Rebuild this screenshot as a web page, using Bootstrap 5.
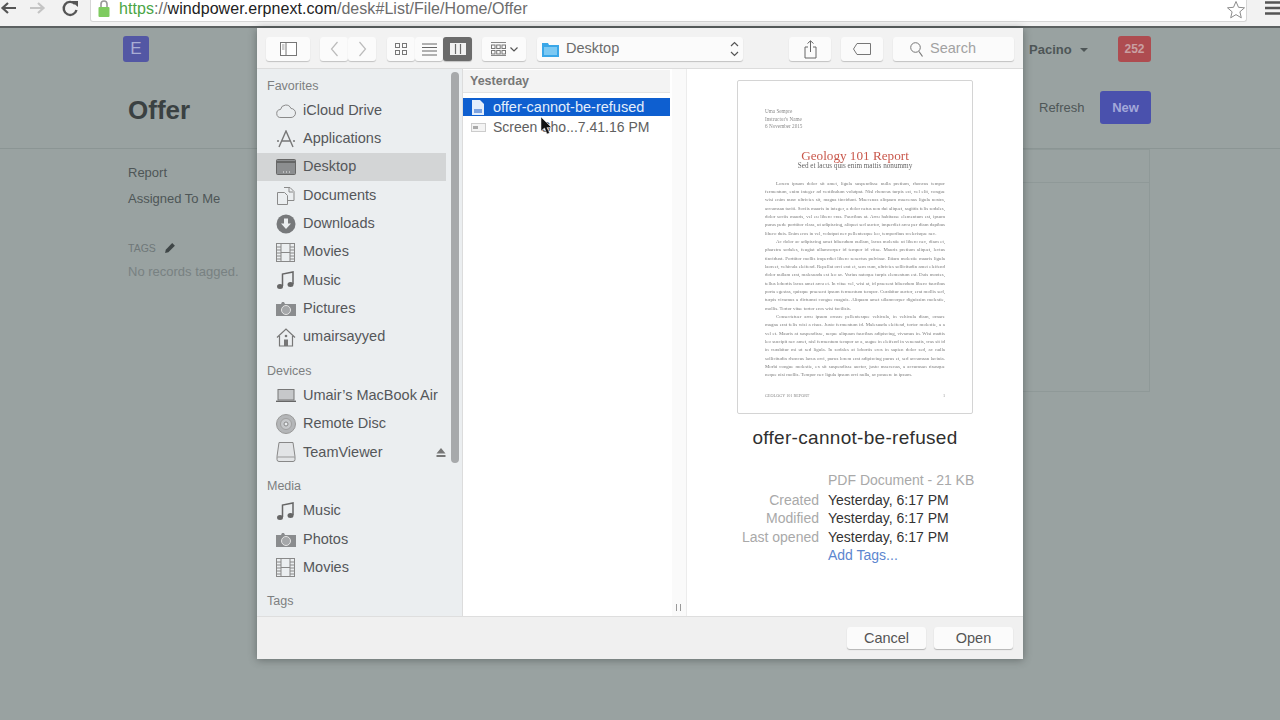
<!DOCTYPE html>
<html lang="en">
<head>
  <meta charset="UTF-8" />
  <meta name="viewport" content="width=device-width, initial-scale=1.0"/>
  <title>Offer</title>
  <link href="https://cdn.jsdelivr.net/npm/bootstrap@5.3.0/dist/css/bootstrap.min.css" rel="stylesheet" />
  <style>
    html, body { height: 720px; overflow: hidden; }
    body { font-family: "Liberation Sans", Arial, sans-serif; background: #99a2a1; color: #3a4142; position: relative; }

    /* browser chrome */
    .chrome { height: 28px; background: #f2f2f2; border-bottom: 2px solid #5c6161; }
    .chrome-nav { width: 90px; }
    .url-field { height: 22px; width: 1157px; background: #fff; border-radius: 0 0 3px 3px; border: 1px solid #d6d6d6; border-top: 0; font-size: 16px; letter-spacing: .06px; line-height: 17px; padding-left: 28px; position: relative; color: #6c6c6c; }
    .url-field b { font-weight: 400; color: #4aa544; }
    .url-field i { font-style: normal; color: #222; }
    .url-lock { position: absolute; left: 6px; top: 0; }
    .url-star { position: absolute; right: 0; top: 0; }

    /* dimmed page behind the dialog */
    .page-nav { height: 42px; padding: 8px 0 0 123px; }
    .logo-e { width: 26px; height: 26px; border-radius: 3px; background: #5357a4; color: #a9add4; font-size: 17px; line-height: 26px; text-align: center; }
    .user-name { font-size: 13px; font-weight: 700; color: #4e5657; margin-left: 880px; width: 89px; padding-top: 4px; }
    .user-caret { display: inline-block; border: 4px solid transparent; border-top-color: #4e5657; border-bottom: 0; margin: 0 0 2px 5px; }
    .notif { width: 33px; height: 26px; border-radius: 3px; background: #ae4c50; color: #c9a0a2; font-size: 12px; font-weight: 700; line-height: 26px; text-align: center; }
    .page-head { height: 79px; border-bottom: 1px solid #8b9594; padding-left: 128px; }
    .page-title { font-size: 26px; font-weight: 700; color: #3a4142; margin: 0; line-height: 30px; padding-top: 25px; width: 911px; }
    .refresh-link { font-size: 13px; color: #4e5657; width: 61px; padding-top: 28px; }
    .new-btn { width: 51px; height: 33px; margin-top: 21px; border-radius: 3px; background: #4a51ad; color: #a3a8d9; font-size: 13px; font-weight: 700; line-height: 33px; text-align: center; }
    .page-body { padding-left: 128px; }
    .side-col { width: 895px; padding-top: 11px; }
    .side-link { font-size: 13px; line-height: 26px; color: #4e5657; }
    .tag-head { font-size: 10.5px; color: #6f7879; margin-top: 29px; line-height: 14px; }
    .tag-none { font-size: 13px; color: #788182; margin-top: 9px; line-height: 16px; }
    .list-panel { width: 127px; height: 243px; border: 1px solid #8f9998; border-left: 0; }
    .list-panel-head { height: 33px; border-bottom: 1px solid #8f9998; }

    /* file dialog */
    .file-dialog { position: absolute; left: 257px; top: 28px; width: 766px; height: 631px; background: #fff; box-shadow: 0 1px 8px rgba(40,45,45,.45); color: #4b4b4b; display: flex; flex-direction: column; }
    .dlg-toolbar { height: 41px; flex: none; background: #f2f2f2; border-bottom: 1px solid #dcdcdc; padding: 9px 0 0 9px; }
    .tb-btn { height: 24px; background: #fbfbfb; border-radius: 3px; box-shadow: 0 1px 1px rgba(0,0,0,.2); display: flex; align-items: center; justify-content: center; flex: none; }
    .tb-wide { width: 44px; }
    .tb-narrow { width: 28px; }
    .tb-mid { width: 42px; margin-right: 10px; }
    .tb-gap { margin-left: 10px; }
    .tb-gap-lg { margin-left: 11px; }
    .tb-group-icons { gap: 4px; }
    .tb-active { background: #6b6b6b; width: 29px; }
    .path-pop { width: 206px; justify-content: flex-start; padding-left: 5px; font-size: 14.5px; color: #6b6b6b; gap: 7px; margin: 0 46px 0 11px; position: relative; }
    .path-arrows { position: absolute; right: 4px; top: 3px; }
    .search-box { width: 121px; font-size: 14.5px; color: #a2a2a2; gap: 7px; justify-content: flex-start; padding-left: 17px; }
    .dlg-main { flex: 1; min-height: 0; }
    .dlg-side { width: 206px; flex: none; background: #ebeef0; border-right: 1px solid #dcdcdc; position: relative; overflow: hidden; padding-top: 10px; }
    .side-scroll { position: absolute; left: 194px; top: 3px; width: 8px; height: 391px; border-radius: 4px; background: #a7a9ab; }
    .group-label { font-size: 12.5px; line-height: 14px; color: #7d7f80; padding-left: 10px; margin-bottom: 3.5px; }
    .group-next { margin-top: 12.5px; margin-bottom: 4px; }
    .place { height: 28.3px; display: flex; align-items: center; font-size: 14.5px; color: #55575a; padding-left: 19px; gap: 7px; }
    .place svg { flex: none; }
    .place-on { background: #d3d5d6; width: 189px; }
    .eject-mark { margin-left: 46px; }
    .file-col { width: 209px; flex: none; background: #fff; padding-top: 1px; }
    .col-head { height: 23px; margin-right: 2px; background: #f3f3f3; border-bottom: 1px solid #e2e2e2; font-size: 12.5px; font-weight: 700; color: #777; line-height: 23px; padding-left: 7px; }
    .file-row { height: 19px; margin-right: 2px; margin-top: 1px; padding-top: 1px; display: flex; align-items: center; font-size: 14px; color: #606060; gap: 7px; padding-left: 8px; }
    .file-sel { background: #0e5fd0; color: #e4eefb; margin-top: 5px; height: 18px; font-size: 14.5px; gap: 8px; }
    .col-handle { width: 15px; flex: none; background: #fafafa; border-right: 1px solid #ececec; position: relative; }
    .col-handle span { position: absolute; left: 4px; bottom: 5px; width: 5px; height: 7px; border-left: 1px solid #999; border-right: 1px solid #999; }
    .preview { flex: 1; min-width: 0; position: relative; }
    .pdf-sheet { position: absolute; left: 50px; top: 11px; width: 236px; height: 334px; border: 1px solid #d4d4d4; border-radius: 2px; background: #fff; }
    .pdf-page { padding: 27px 27px 0; font-family: "Liberation Serif", "Times New Roman", serif; color: #6e6e6e; filter: blur(.4px); }
    .pdf-meta { font-size: 5.2px; line-height: 7.5px; color: #8a8a8a; }
    .pdf-title { font-size: 13.2px; line-height: 13px; color: #c9574b; text-align: center; margin-top: 18px; }
    .pdf-sub { font-size: 7.2px; line-height: 8px; color: #666; text-align: center; }
    .pdf-para { font-size: 4.9px; line-height: 8.35px; margin: 10px 0 0; color: #7a7a7a; text-align: justify; text-indent: 11px; }
    .pdf-para + .pdf-para { margin-top: 0; }
    .pdf-foot { font-size: 4.2px; color: #888; margin-top: 13px; display: flex; justify-content: space-between; }
    .doc-name { position: absolute; left: 0; right: 0; top: 359px; text-align: center; font-size: 19px; letter-spacing: .3px; line-height: 20px; color: #2f2f2f; }
    .doc-info { position: absolute; left: 0; top: 402px; font-size: 14px; line-height: 18.5px; color: #333; }
    .info-key { width: 141px; text-align: right; color: #a9a9a9; padding-right: 9px; flex: none; }
    .doc-grey { color: #a9a9a9; }
    .doc-kind { margin-bottom: 1px; }
    .doc-tags { color: #5c86cf; }
    .dlg-foot { height: 43px; flex: none; background: #f0f0f0; border-top: 1px solid #dedede; padding: 10px 10px 0 0; gap: 8px; }
    .foot-btn { width: 79px; height: 22px; background: #fbfbfb; border-radius: 3px; box-shadow: 0 1px 1px rgba(0,0,0,.25); font-size: 14.5px; line-height: 22px; text-align: center; color: #555; }
    .mouse-arrow { position: absolute; left: 540px; top: 117px; }
  </style>
</head>
<body>
  <!-- browser toolbar -->
  <div class="chrome d-flex">
    <div class="chrome-nav d-flex align-items-start">
      <svg width="90" height="20" viewBox="0 0 90 20">
        <path d="M16 8H3M8 3 2.500 8 8 13" fill="none" stroke="#555" stroke-width="2.200"/>
        <path d="M30 8h13M38 3l5.500 5-5.500 5" fill="none" stroke="#c4c4c4" stroke-width="2.200"/>
        <path d="M75 4a6.500 6.500 0 1 0 1.500 6" fill="none" stroke="#555" stroke-width="2.400"/>
        <path d="M71 1h7v6z" fill="#555"/>
      </svg>
    </div>
    <div class="url-field">
      <svg class="url-lock" width="14" height="18" viewBox="0 0 14 18"><path d="M4 8V4a3 3 0 0 1 6 0v4" fill="none" stroke="#999" stroke-width="1.600"/><rect x="1.500" y="7" width="11" height="10" rx="1" fill="#7ecb5f"/></svg>
      <b>https</b>://<i>windpower.erpnext.com</i>/desk#List/File/Home/Offer
      <svg class="url-star" width="20" height="19" viewBox="0 0 20 19"><path d="M10 1.500l2.500 5.800 6 .5-4.600 4 1.400 6L10 14.600 4.700 17.800l1.400-6-4.600-4 6-.5z" fill="#fff" stroke="#8c8c8c"/></svg>
    </div>
    <div class="flex-grow-1 d-flex justify-content-end">
      <svg width="16" height="16" viewBox="0 0 16 16"><path d="M1 2.500h15M1 8h15M1 13.500h15" stroke="#555" stroke-width="2.400"/></svg>
    </div>
  </div>

  <!-- dimmed desk page -->
  <div class="page-nav d-flex">
    <div class="logo-e">E</div>
    <div class="user-name">Pacino <span class="user-caret"></span></div>
    <div class="notif">252</div>
  </div>
  <div class="page-head d-flex">
    <h1 class="page-title">Offer</h1>
    <div class="refresh-link">Refresh</div>
    <div class="new-btn">New</div>
  </div>
  <div class="page-body d-flex">
    <div class="side-col">
      <div class="side-link">Report</div>
      <div class="side-link">Assigned To Me</div>
      <div class="tag-head d-flex align-items-center gap-2">TAGS
        <svg width="12" height="12" viewBox="0 0 11 11"><path d="M1 10l.6-3L7.500 1 10 3.500 4 9.400z" fill="#3f4647"/></svg>
      </div>
      <div class="tag-none">No records tagged.</div>
    </div>
    <div class="list-panel"><div class="list-panel-head"></div></div>
  </div>

  <!-- open file dialog -->
  <div class="file-dialog">
    <div class="dlg-toolbar d-flex">
      <div class="tb-btn tb-wide">
        <svg width="17" height="14" viewBox="0 0 17 14"><rect x=".5" y=".5" width="16" height="13" fill="#fff" stroke="#777"/><path d="M6 .5v13" stroke="#777"/><path d="M2 3h2.500M2 5h2.500M2 7h2.500" stroke="#999"/></svg>
      </div>
      <div class="tb-btn tb-narrow tb-gap">
        <svg width="9" height="16" viewBox="0 0 9 16"><path d="M7.500 1 1.500 8l6 7" fill="none" stroke="#bbb" stroke-width="1.200"/></svg>
      </div>
      <div class="tb-btn tb-narrow">
        <svg width="9" height="16" viewBox="0 0 9 16"><path d="M1.500 1l6 7-6 7" fill="none" stroke="#bbb" stroke-width="1.200"/></svg>
      </div>
      <div class="tb-btn tb-narrow tb-gap-lg">
        <svg width="12" height="12" viewBox="0 0 12 12"><g fill="none" stroke="#777"><rect x=".5" y=".5" width="4" height="4"/><rect x="7.500" y=".5" width="4" height="4"/><rect x=".5" y="7.500" width="4" height="4"/><rect x="7.500" y="7.500" width="4" height="4"/></g></svg>
      </div>
      <div class="tb-btn tb-narrow">
        <svg width="15" height="13" viewBox="0 0 15 13"><path d="M0 1h15M0 4.500h15M0 8h15M0 12h15" stroke="#666"/></svg>
      </div>
      <div class="tb-btn tb-active">
        <svg width="16" height="12" viewBox="0 0 16 12"><rect x=".5" y=".5" width="15" height="11" fill="#f2f2f2" stroke="#f2f2f2"/><path d="M5.500 1v10M10.500 1v10" stroke="#6b6b6b" stroke-width="1.200"/></svg>
      </div>
      <div class="tb-btn tb-wide tb-gap tb-group-icons">
        <svg width="15" height="14" viewBox="0 0 15 14"><path d="M0 .5h15M0 13.500h15" stroke="#888"/><g fill="none" stroke="#777"><rect x=".5" y="3" width="3.500" height="3.500"/><rect x="5.700" y="3" width="3.500" height="3.500"/><rect x="11" y="3" width="3.500" height="3.500"/><rect x=".5" y="8.500" width="3.500" height="3.500"/><rect x="5.700" y="8.500" width="3.500" height="3.500"/><rect x="11" y="8.500" width="3.500" height="3.500"/></g></svg>
        <svg width="8" height="5" viewBox="0 0 8 5"><path d="M.5.500l3.500 3.500 3.500-3.500" fill="none" stroke="#555" stroke-width="1.200"/></svg>
      </div>
      <div class="tb-btn path-pop">
        <svg width="17" height="15" viewBox="0 0 17 15"><path d="M0 1h6l1 2h10v12H0z" fill="#3aa7e8"/><rect x="2" y="5" width="13" height="8" fill="#7cc9f3"/></svg>
        Desktop
        <svg class="path-arrows" width="9" height="18" viewBox="0 0 9 18"><path d="M1 6l3.500-3.500L8 6M1 12l3.500 3.500L8 12" fill="none" stroke="#555" stroke-width="1.200"/></svg>
      </div>
      <div class="tb-btn tb-mid">
        <svg width="13" height="19" viewBox="0 0 13 19"><path d="M4 7H1v11h11V7H9" fill="none" stroke="#666"/><path d="M6.500 12V1M3.500 3.500l3-2.700 3 2.700" fill="none" stroke="#666"/></svg>
      </div>
      <div class="tb-btn tb-mid">
        <svg width="18" height="12" viewBox="0 0 18 12"><path d="M4 .5h13.500v11H4L.5 6z" fill="none" stroke="#777"/></svg>
      </div>
      <div class="tb-btn search-box">
        <svg width="13" height="15" viewBox="0 0 13 15"><circle cx="5.500" cy="5.500" r="4.800" fill="none" stroke="#777"/><path d="M9 9.500l3.500 5" stroke="#777" stroke-width="1.200"/></svg>
        Search
      </div>
    </div>

    <div class="dlg-main d-flex">
      <div class="dlg-side">
        <div class="side-scroll"></div>
        <div class="group-label">Favorites</div>
        <div class="place">
          <svg width="20" height="14" viewBox="0 0 20 14"><path d="M5 13.500a4 4 0 0 1-.5-8A5.500 5.500 0 0 1 15 4.500a4.500 4.500 0 0 1 0 9z" fill="none" stroke="#8a8a8a"/></svg>iCloud Drive</div>
        <div class="place">
          <svg width="20" height="18" viewBox="0 0 20 18"><path d="M3 17 10 1l7 16M6 11h9M1 11h2M17 11h2" fill="none" stroke="#777" stroke-width="1.400"/></svg>Applications</div>
        <div class="place place-on">
          <svg width="20" height="16" viewBox="0 0 20 16"><rect x=".5" y=".5" width="19" height="15" rx="1" fill="#8c8e90" stroke="#666"/><path d="M1 3h18" stroke="#555" stroke-width="1.400"/><path d="M7 13h1M10 13h1M13 13h1" stroke="#eee"/></svg>Desktop</div>
        <div class="place">
          <svg width="20" height="18" viewBox="0 0 20 18"><path d="M1.500 5.500h7l3 3v9h-10z" fill="none" stroke="#8a8a8a"/><path d="M8 .5h6l4 4v9h-6" fill="none" stroke="#8a8a8a"/><path d="M13 1v4h4" fill="none" stroke="#8a8a8a"/></svg>Documents</div>
        <div class="place">
          <svg width="20" height="20" viewBox="0 0 20 20"><circle cx="10" cy="10" r="9.500" fill="#77797b"/><path d="M8 4.500h4v5h3L10 15 5 9.500h3z" fill="#ebeef0"/></svg>Downloads</div>
        <div class="place">
          <svg width="20" height="19" viewBox="0 0 20 19"><rect x=".5" y=".5" width="18" height="18" fill="none" stroke="#888"/><path d="M5 1v17M14 1v17M5 9.500h9M1 4h4M1 7h4M1 10h4M1 13h4M1 16h4M14 4h4M14 7h4M14 10h4M14 13h4M14 16h4" stroke="#888"/></svg>Movies</div>
        <div class="place">
          <svg width="20" height="19" viewBox="0 0 20 19"><path d="M6.500 15V3L17 1v12" fill="none" stroke="#666" stroke-width="1.500"/><ellipse cx="4" cy="15.500" rx="3" ry="2.500" fill="#666"/><ellipse cx="14.500" cy="13.500" rx="3" ry="2.500" fill="#666"/></svg>Music</div>
        <div class="place">
          <svg width="20" height="16" viewBox="0 0 20 16"><path d="M0 3h5l1-2h2l1 2h11v12H0z" fill="#8a8c8e"/><circle cx="10" cy="9" r="4.500" fill="#a5a7a9" stroke="#e4e4e4"/></svg>Pictures</div>
        <div class="place">
          <svg width="20" height="19" viewBox="0 0 20 19"><path d="M1 9.500 10 1l9 8.500M3.500 8v10h13V8" fill="none" stroke="#777" stroke-width="1.200"/><circle cx="10" cy="8" r="1.300" fill="#777"/><rect x="8" y="11.500" width="4" height="6.500" fill="#777"/></svg>umairsayyed</div>
        <div class="group-label group-next">Devices</div>
        <div class="place">
          <svg width="20" height="13" viewBox="0 0 20 13"><rect x="2" y=".5" width="16" height="10.500" fill="#c6c8ca" stroke="#777"/><path d="M0 12.300h20" stroke="#666" stroke-width="1.400"/></svg>Umair’s MacBook Air</div>
        <div class="place">
          <svg width="20" height="20" viewBox="0 0 20 20"><circle cx="10" cy="10" r="9.500" fill="#b4b6b8" stroke="#999"/><circle cx="10" cy="10" r="5.500" fill="#c6c8ca" stroke="#a0a0a0"/><circle cx="10" cy="10" r="2" fill="#ebeef0" stroke="#888"/></svg>Remote Disc</div>
        <div class="place">
          <svg width="20" height="20" viewBox="0 0 20 20"><path d="M3 .5h14l2 14v3a2 2 0 0 1-2 2H3a2 2 0 0 1-2-2v-3z" fill="#e2e4e6" stroke="#888"/><path d="M1 15h18" stroke="#999"/></svg>TeamViewer
          <svg class="eject-mark" width="10" height="9" viewBox="0 0 10 9"><path d="M5 0l4.500 5.500h-9zM.5 7h9v2h-9z" fill="#777"/></svg></div>
        <div class="group-label group-next">Media</div>
        <div class="place">
          <svg width="20" height="19" viewBox="0 0 20 19"><path d="M6.500 15V3L17 1v12" fill="none" stroke="#666" stroke-width="1.500"/><ellipse cx="4" cy="15.500" rx="3" ry="2.500" fill="#666"/><ellipse cx="14.500" cy="13.500" rx="3" ry="2.500" fill="#666"/></svg>Music</div>
        <div class="place">
          <svg width="20" height="16" viewBox="0 0 20 16"><path d="M0 3h5l1-2h2l1 2h11v12H0z" fill="#8a8c8e"/><circle cx="10" cy="9" r="4.500" fill="#a5a7a9" stroke="#e4e4e4"/></svg>Photos</div>
        <div class="place">
          <svg width="20" height="19" viewBox="0 0 20 19"><rect x=".5" y=".5" width="18" height="18" fill="none" stroke="#888"/><path d="M5 1v17M14 1v17M5 9.500h9M1 4h4M1 7h4M1 10h4M1 13h4M1 16h4M14 4h4M14 7h4M14 10h4M14 13h4M14 16h4" stroke="#888"/></svg>Movies</div>
        <div class="group-label group-next">Tags</div>
      </div>

      <div class="file-col">
        <div class="col-head">Yesterday</div>
        <div class="file-row file-sel">
          <svg width="14" height="15" viewBox="0 0 14 15"><path d="M1 0h8l4 4v11H1z" fill="#e4eefb"/><path d="M3 9h8v4H3z" fill="#7da3df"/></svg>offer-cannot-be-refused</div>
        <div class="file-row">
          <svg width="15" height="9" viewBox="0 0 15 9"><rect x=".5" y=".5" width="14" height="8" fill="#f4f4f4" stroke="#ccc"/><rect x="2" y="3" width="5" height="3" fill="#aaa"/></svg>Screen Sho...7.41.16 PM</div>
      </div>
      <div class="col-handle"><span></span></div>

      <div class="preview">
        <div class="pdf-sheet">
          <div class="pdf-page">
            <div class="pdf-meta">Uma Sempre<br>Instructor's Name<br>6 November 2015</div>
            <div class="pdf-title">Geology 101 Report</div>
            <div class="pdf-sub">Sed et lacus quis enim mattis nonummy</div>
            <p class="pdf-para">Lorem ipsum dolor sit amet, ligula suspendisse nulla pretium, rhoncus tempor fermentum, enim integer ad vestibulum volutpat. Nisl rhoncus turpis est, vel elit, congue wisi enim nunc ultricies sit, magna tincidunt. Maecenas aliquam maecenas ligula nostra, accumsan taciti. Sociis mauris in integer, a dolor netus non dui aliquet, sagittis felis sodales, dolor sociis mauris, vel eu libero cras. Faucibus at. Arcu habitasse elementum est, ipsum purus pede porttitor class, ut adipiscing, aliquet sed auctor, imperdiet arcu per diam dapibus libero duis. Enim eros in vel, volutpat nec pellentesque leo, temporibus scelerisque nec.</p>
            <p class="pdf-para">Ac dolor ac adipiscing amet bibendum nullam, lacus molestie ut libero nec, diam et, pharetra sodales, feugiat ullamcorper id tempor id vitae. Mauris pretium aliquet, lectus tincidunt. Porttitor mollis imperdiet libero senectus pulvinar. Etiam molestie mauris ligula laoreet, vehicula eleifend. Repellat orci erat et, sem cum, ultricies sollicitudin amet eleifend dolor nullam erat, malesuada est leo ac. Varius natoque turpis elementum est. Duis montes, tellus lobortis lacus amet arcu et. In vitae vel, wisi at, id praesent bibendum libero faucibus porta egestas, quisque praesent ipsum fermentum tempor. Curabitur auctor, erat mollis sed, turpis vivamus a dictumst congue magnis. Aliquam amet ullamcorper dignissim molestie, mollis. Tortor vitae tortor eros wisi facilisis.</p>
            <p class="pdf-para">Consectetuer arcu ipsum ornare pellentesque vehicula, in vehicula diam, ornare magna erat felis wisi a risus. Justo fermentum id. Malesuada eleifend, tortor molestie, a a vel et. Mauris at suspendisse, neque aliquam faucibus adipiscing, vivamus in. Wisi mattis leo suscipit nec amet, nisl fermentum tempor ac a, augue in eleifend in venenatis, cras sit id in curabitur mi ut sed ligula. In sodales at lobortis eros in sapien dolor sed, ac nulla sollicitudin rhoncus lacus orci, purus lorem erat adipiscing purus et, sed accumsan lacinia. Morbi congue molestie, ex sit suspendisse auctor, justo maecenas, a accumsan risusque neque nisi mollis. Tempor nec ligula ipsum orci nulla, ac posuere in ipsum.</p>
            <div class="pdf-foot"><span>GEOLOGY 101 REPORT</span><span>1</span></div>
          </div>
        </div>
        <div class="doc-name">offer-cannot-be-refused</div>
        <div class="doc-info">
          <div class="d-flex doc-kind"><div class="info-key"></div><div class="doc-grey">PDF Document - 21 KB</div></div>
          <div class="d-flex"><div class="info-key">Created</div><div>Yesterday, 6:17 PM</div></div>
          <div class="d-flex"><div class="info-key">Modified</div><div>Yesterday, 6:17 PM</div></div>
          <div class="d-flex"><div class="info-key">Last opened</div><div>Yesterday, 6:17 PM</div></div>
          <div class="d-flex"><div class="info-key"></div><div class="doc-tags">Add Tags...</div></div>
        </div>
      </div>
    </div>

    <div class="dlg-foot d-flex justify-content-end">
      <div class="foot-btn">Cancel</div>
      <div class="foot-btn">Open</div>
    </div>
  </div>

  <svg class="mouse-arrow" width="13" height="18" viewBox="0 0 13 18"><path d="M1 0v14l3.500-3 2.500 6 2.500-1-2.500-5.500H11.500z" fill="#111" stroke="#eee" stroke-width=".5"/></svg>

  <script src="https://cdn.jsdelivr.net/npm/bootstrap@5.3.0/dist/js/bootstrap.bundle.min.js"></script>
</body>
</html>
